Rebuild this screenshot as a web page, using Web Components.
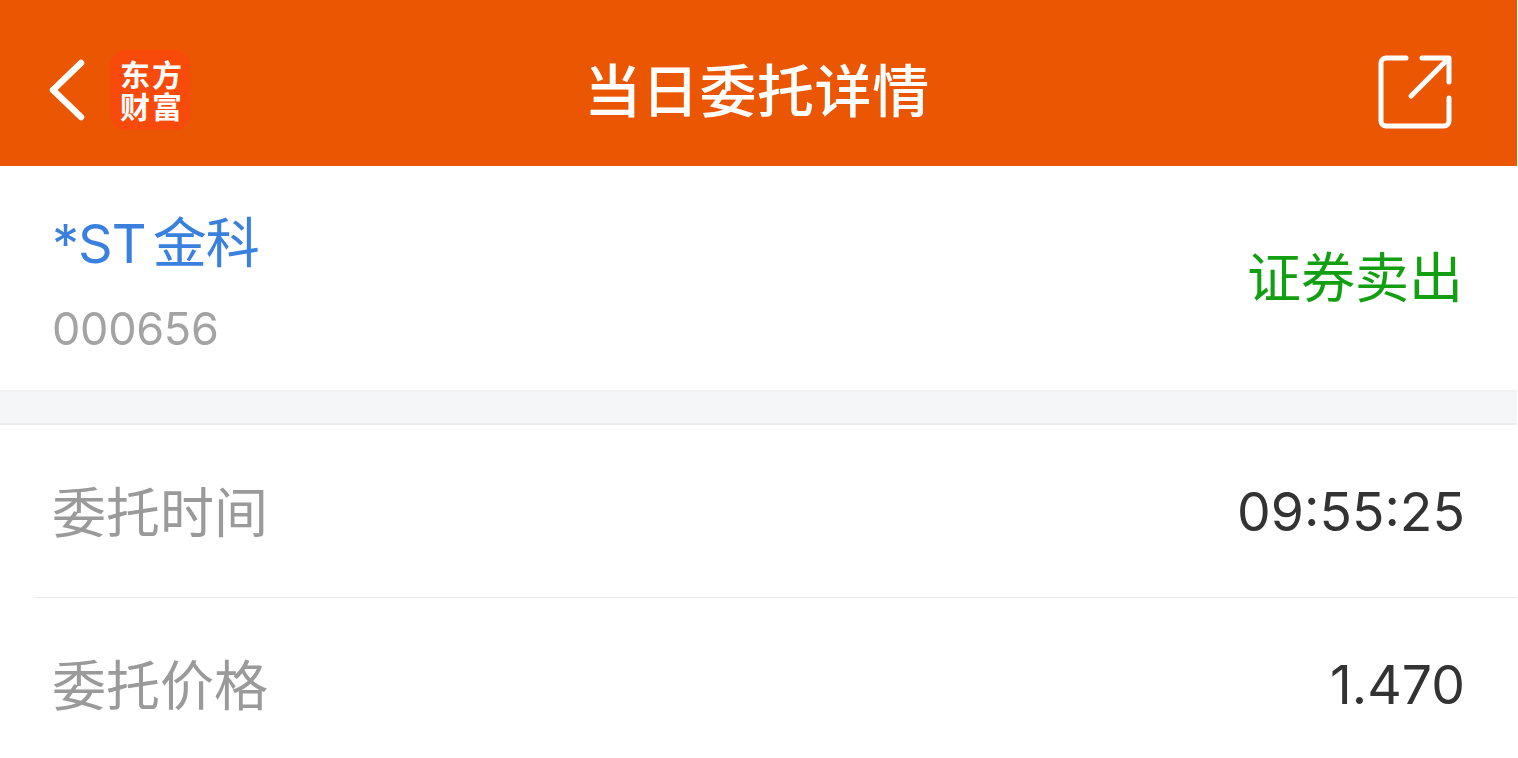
<!DOCTYPE html>
<html lang="zh">
<head>
<meta charset="utf-8">
<title>当日委托详情</title>
<style>
  html, body { margin: 0; height: 100%; overflow: hidden; background: #fff; }
  body { font-family: "Inter", "Noto Sans CJK SC", sans-serif; }
</style>
</head>
<body>
<detail-page>
  <app-header title="当日委托详情"></app-header>
  <stock-card name="*ST 金科" code="000656" kind="证券卖出"></stock-card>
  <section-gap></section-gap>
  <info-row label="委托时间" value="09:55:25"></info-row>
  <info-row label="委托价格" value="1.470"></info-row>
</detail-page>
<script>
class DetailPage extends HTMLElement {
    constructor() {
        super();
        this.attachShadow({ mode: 'open' });
        this.shadowRoot.innerHTML = `
            <style>
                :host {
                    display: flex;
                    flex-direction: column;
                    width: 1517px;
                    height: 758px;
                    overflow: hidden;
                    filter: blur(.6px);
                }
            </style>
            <slot></slot>
        `;
    }
}
customElements.define('detail-page', DetailPage);

class AppHeader extends HTMLElement {
    constructor() {
        super();
        this.attachShadow({ mode: 'open' });
        this.shadowRoot.innerHTML = `
            <style>
                :host {
                    display: grid;
                    grid-template-columns: 1fr auto 1fr;
                    align-items: center;
                    flex: none;
                    height: 166px;
                    box-sizing: border-box;
                    padding: 14px 65px 0 48px;
                    background: #eb5602;
                    color: #fff;
                }
                .left { display: flex; align-items: center; gap: 24px; }
                .back { width: 38px; height: 62px; display: block; }
                .logo {
                    width: 80px;
                    height: 80px;
                    border-radius: 16px;
                    background: #f84a0a;
                    display: flex;
                    align-items: center;
                    justify-content: center;
                }
                .logo span {
                    width: 66px;
                    padding: 0 0 2px 4px;
                    text-align: center;
                    font: 700 30px/32px "Noto Sans CJK SC", sans-serif;
                    letter-spacing: 2px;
                }
                h1 {
                    margin: 0 0 6px 14px;
                    font: 500 57px/1 "Noto Sans CJK SC", sans-serif;
                    letter-spacing: .6px;
                }
                .share { justify-self: end; width: 74px; height: 74px; display: block; margin-top: 4px; }
            </style>
            <div class="left">
                <svg class="back" viewBox="0 0 38 62" fill="none" stroke="#fff" stroke-width="6.5" stroke-linecap="round" stroke-linejoin="round">
                    <path d="M33 4 5 31l28 27"/>
                </svg>
                <div class="logo"><span>东方财富</span></div>
            </div>
            <h1></h1>
            <svg class="share" viewBox="0 0 74 74" fill="none" stroke="#fff" stroke-width="5" stroke-linecap="round" stroke-linejoin="round">
                <path d="M28 3H8a5 5 0 0 0-5 5v58a5 5 0 0 0 5 5h58a5 5 0 0 0 5-5V43"/>
                <path d="M44 3h27v24"/>
                <path d="M70 4 33 41"/>
            </svg>
        `;
        this.shadowRoot.querySelector('h1').textContent = this.getAttribute('title');
    }
}
customElements.define('app-header', AppHeader);

class StockCard extends HTMLElement {
    constructor() {
        super();
        this.attachShadow({ mode: 'open' });
        this.shadowRoot.innerHTML = `
            <style>
                :host {
                    display: flex;
                    justify-content: space-between;
                    align-items: center;
                    flex: none;
                    height: 224px;
                    box-sizing: border-box;
                    padding: 0 54px 0 52px;
                    background: #fff;
                }
                .name { color: #3a80de; font-size: 54px; line-height: 64px; letter-spacing: -1px; word-spacing: -7px; }
                .code { color: #a3a3a3; font-size: 45px; line-height: 54px; margin-top: 26px; letter-spacing: -.3px; }
                .kind { color: #12a012; font-size: 54px; line-height: 64px; margin-top: 2px; }
                .info { margin-top: 12px; }
            </style>
            <div class="info">
                <div class="name"></div>
                <div class="code"></div>
            </div>
            <div class="kind"></div>
        `;
        this.shadowRoot.querySelector('.name').textContent = this.getAttribute('name');
        this.shadowRoot.querySelector('.code').textContent = this.getAttribute('code');
        this.shadowRoot.querySelector('.kind').textContent = this.getAttribute('kind');
    }
}
customElements.define('stock-card', StockCard);

class SectionGap extends HTMLElement {
    constructor() {
        super();
        this.attachShadow({ mode: 'open' });
        this.shadowRoot.innerHTML = `
            <style>
                :host {
                    display: block;
                    flex: none;
                    height: 35px;
                    box-sizing: border-box;
                    background: #f5f6f8;
                    border-top: 2px solid #f0f1f2;
                    border-bottom: 2px solid #ebecee;
                }
            </style>
        `;
    }
}
customElements.define('section-gap', SectionGap);

class InfoRow extends HTMLElement {
    constructor() {
        super();
        this.attachShadow({ mode: 'open' });
        this.shadowRoot.innerHTML = `
            <style>
                :host { display: block; flex: none; padding-left: 34px; }
                .row {
                    display: flex;
                    justify-content: space-between;
                    align-items: center;
                    height: 172px;
                    padding: 0 52px 0 18px;
                    border-bottom: 1px solid #ececec;
                }
                .label { color: #9a9a9a; font-size: 54px; margin-bottom: 4px; }
                .value { color: #333; font-size: 53.5px; }
            </style>
            <div class="row">
                <span class="label"></span>
                <span class="value"></span>
            </div>
        `;
        this.shadowRoot.querySelector('.label').textContent = this.getAttribute('label');
        this.shadowRoot.querySelector('.value').textContent = this.getAttribute('value');
    }
}
customElements.define('info-row', InfoRow);
</script>
</body>
</html>
